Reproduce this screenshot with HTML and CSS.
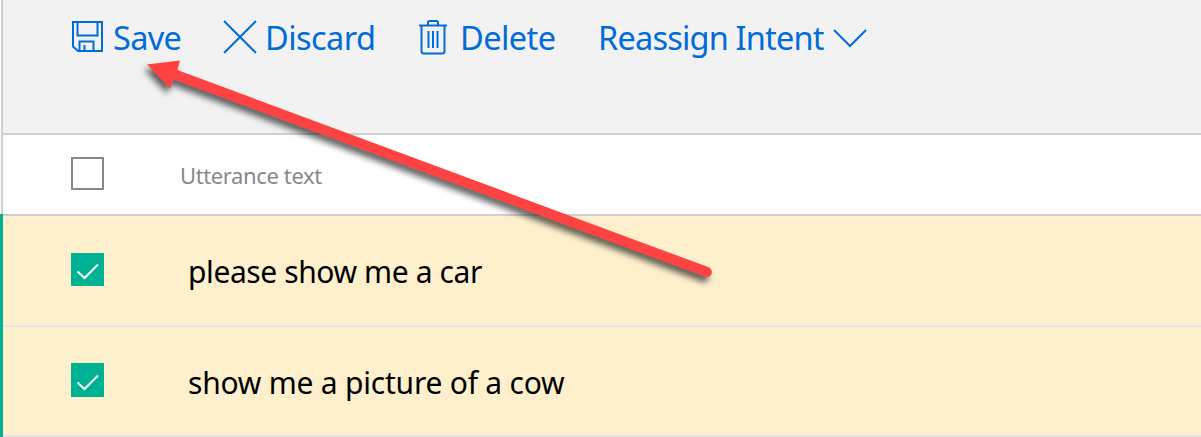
FILE: index.html
```
<!DOCTYPE html>
<html lang="en">
<head>
<meta charset="utf-8">
<title>Utterances</title>
<link rel="stylesheet" href="styles.css">
</head>
<body>
<main class="panel">
  <nav class="toolbar">
    <a class="action save"><svg class="icon" width="32" height="32" viewBox="0 0 32 32"><path d="M1 1H30V30H6L1 25.500Z M5.500 1V14.500H25.500V1 M7.500 30V20.500H21.500V30 M12.500 24V30"/></svg><span class="label">Save</span></a>
    <a class="action discard"><svg class="icon" width="34" height="34" viewBox="0 0 34 34"><path d="M1 1L33 33M33 1L1 33"/></svg><span class="label">Discard</span></a>
    <a class="action delete"><svg class="icon" width="28" height="35" viewBox="0 0 28 35"><path d="M0 5.500H28M9 5V2.500Q9 1 10.500 1H17.500Q19 1 19 2.500V5M2.500 5.500V31Q2.500 33.500 5 33.500H23Q25.500 33.500 25.500 31V5.500M9.500 11V28M14 11V28M18.500 11V28"/></svg><span class="label">Delete</span></a>
    <a class="action reassign"><span class="label">Reassign Intent</span><svg class="icon" width="34" height="19" viewBox="0 0 34 19"><path d="M1 1L17 17L33 1"/></svg></a>
  </nav>
  <section class="list">
    <div class="row heading"><span class="check"></span><span class="title">Utterance text</span></div>
    <div class="row item"><span class="check checked"><svg width="33" height="33" viewBox="0 0 33 33"><path d="M6.500 18.500L13.500 25L27 11.500"/></svg></span><span class="text first">please show me a car</span></div>
    <div class="row item last"><span class="check checked"><svg width="33" height="33" viewBox="0 0 33 33"><path d="M6.500 19.500L13.500 26L27 12.500"/></svg></span><span class="text second">show me a picture of a cow</span></div>
  </section>
</main>
<svg class="arrow" width="1201" height="437" viewBox="0 0 1201 437"><path d="M147 64.500L180 60.500L177.300 70L708.700 267.300A5 5 0 0 1 705.300 276.700L173.700 79.500L170 88.500Z"/></svg>
</body>
</html>
```
FILE: styles.css
```
* { box-sizing: border-box; }
body {
  margin: 0;
  width: 1201px;
  height: 437px;
  overflow: hidden;
  background: #fff;
  font-family: "Noto Sans", "Open Sans", sans-serif;
}
.panel { display: flex; flex-direction: column; }
.toolbar {
  display: flex;
  align-items: flex-start;
  height: 135px;
  margin-left: 1px;
  padding-left: 69px;
  border-left: 2px solid #d0d0d0;
  border-bottom: 2px solid #d0d0d0;
  background: #f2f2f2;
  color: #006cd9;
}
.action { display: flex; align-items: center; height: 74px; white-space: nowrap; }
.label { padding-top: 1px; font-size: 32.5px; line-height: 44px; letter-spacing: -.55px; }
.icon { flex: none; fill: none; stroke: #006cd9; stroke-width: 2; }
.save { width: 151px; gap: 9px; }
.save .label { letter-spacing: -.7px; }
.discard { width: 196px; gap: 8px; }
.delete { width: 179px; gap: 13px; }
.reassign { gap: 9px; }
.reassign .label { letter-spacing: -.8px; }
.reassign .icon { margin-top: 2px; }
.row { display: flex; align-items: center; }
.heading {
  height: 81px;
  margin-left: 1px;
  padding: 0 0 2px 68px;
  border-left: 2px solid #d0d0d0;
  border-bottom: 2px solid #d0d0d0;
}
.check { flex: none; width: 33px; height: 33px; border: 2px solid #888; }
.title { margin-left: 76px; padding-top: 2px; font-size: 22px; letter-spacing: -.38px; color: #888; }
.list { position: relative; }
.list::after {
  content: "";
  position: absolute;
  top: 79px;
  bottom: 0;
  left: 0;
  width: 3px;
  background: #00b294;
}
.item {
  height: 111px;
  padding: 0 0 2px 68px;
  border-left: 3px solid #fff0cd;
  border-bottom: 2px solid #e5e5e5;
  background: #fff0cd;
}
.last { height: 110px; }
.checked { border: 0; background: #00b294; }
.last .checked { height: 34px; }
.checked svg { display: block; fill: none; stroke: #fff; stroke-width: 2; }
.text { margin-left: 84px; padding-top: 4px; font-size: 30px; line-height: 40px; letter-spacing: -.4px; color: #000; white-space: nowrap; }
.second { padding-top: 6px; letter-spacing: -.22px; }
.arrow {
  position: absolute;
  top: 0;
  left: 0;
  fill: #ff4343;
  filter: drop-shadow(-3px 5px 3px rgba(0, 0, 0, .62));
}
```
